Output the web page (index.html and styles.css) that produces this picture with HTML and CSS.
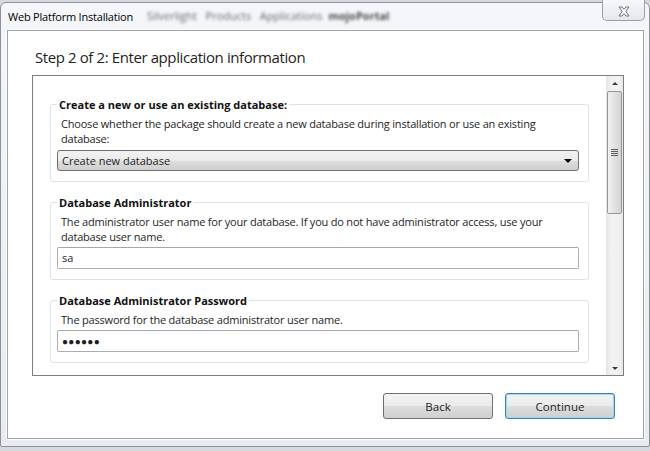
FILE: index.html
```html
<!DOCTYPE html>
<html lang="en">
<head>
    <meta charset="UTF-8">
    <title>Web Platform Installation</title>
    <link rel="stylesheet" href="styles.css">
</head>
<body>
    <div class="window">
        <div class="titlebar">
            <span class="title">Web Platform Installation</span>
            <span class="behind">Silverlight&nbsp;&nbsp; Products&nbsp;&nbsp; Applications&nbsp; <b>mojoPortal</b></span>
            <button class="close-btn">
                <svg width="14" height="11" viewBox="0 0 14 11">
                    <path d="M2 1h3l2 2.5L9 1h3L8.8 5.5 12 10H9L7 7.5 5 10H2l3.2-4.5z" fill="#fff" stroke="#6c7178" stroke-width="1"/>
                </svg>
            </button>
        </div>

        <div class="client">
            <h1 class="step-title">Step 2 of 2: Enter application information</h1>

            <div class="scroll-panel">
                <div class="scroll-content">
                    <fieldset class="group">
                        <legend>Create a new or use an existing database:</legend>
                        <p class="desc">Choose whether the package should create a new database during installation or use an existing database:</p>
                        <div class="select">
                            <span>Create new database</span>
                            <span class="select-arrow"></span>
                        </div>
                    </fieldset>

                    <fieldset class="group">
                        <legend>Database Administrator</legend>
                        <p class="desc">The administrator user name for your database. If you do not have administrator access, use your database user name.</p>
                        <div class="text-input">sa</div>
                    </fieldset>

                    <fieldset class="group">
                        <legend>Database Administrator Password</legend>
                        <p class="desc">The password for the database administrator user name.</p>
                        <div class="text-input password">&#9679;&#9679;&#9679;&#9679;&#9679;&#9679;</div>
                    </fieldset>
                </div>

                <div class="scrollbar">
                    <div class="sb-arrow up"></div>
                    <div class="sb-track">
                        <div class="sb-thumb">
                            <span class="grip"></span>
                        </div>
                    </div>
                    <div class="sb-arrow down"></div>
                </div>
            </div>

            <div class="footer">
                <button class="btn">Back</button>
                <button class="btn primary">Continue</button>
            </div>
        </div>
    </div>
</body>
</html>
```

FILE: styles.css
```css
* {
    margin: 0;
    padding: 0;
    box-sizing: border-box;
}

body {
    width: 650px;
    height: 451px;
    overflow: hidden;
    background-color: #d6dae0;
    font-family: 'Open Sans', 'Noto Sans', Arial, sans-serif;
    font-size: 11px;
    color: #1e1e1e;
}

.window {
    width: 650px;
    height: 445px;
    margin-top: 2px;
    background: linear-gradient(#f4f6f9, #e8ecf1);
    border: 1px solid #8d9299;
    border-radius: 6px 6px 2px 2px;
    display: flex;
    flex-direction: column;
}

.titlebar {
    height: 27px;
    display: flex;
    align-items: flex-start;
    padding-left: 7px;
}

.title {
    font-size: 11px;
    letter-spacing: -0.2px;
    margin-top: 6px;
    color: #000;
}

.behind {
    margin-left: 14px;
    margin-top: 5px;
    font-size: 11px;
    color: #444;
    filter: blur(1.4px);
    opacity: 0.8;
}

.behind b {
    color: #222;
}

.close-btn {
    margin-left: auto;
    margin-right: 4px;
    margin-top: -3px;
    width: 43px;
    height: 21px;
    border: 1px solid #9aa0a8;
    border-top: none;
    border-radius: 0 0 5px 5px;
    background: linear-gradient(#f6f7f9, #e4e8ed);
    display: flex;
    align-items: center;
    justify-content: center;
    padding-top: 2px;
}

.client {
    flex: 1;
    margin: 0 5px 7px 6px;
    background-color: #fff;
    border: 1px solid #9fa4ab;
    box-shadow: 0 0 0 1px #fbfcfd;
    display: flex;
    flex-direction: column;
}

.step-title {
    font-size: 15px;
    font-weight: normal;
    color: #1e1e1e;
    margin: 16px 0 0 27px;
    letter-spacing: -0.4px;
}

.scroll-panel {
    margin: 8px 19px 0 24px;
    height: 301px;
    border: 1px solid #7b7f85;
    display: flex;
    overflow: hidden;
}

.scroll-content {
    flex: 1;
    padding: 21px 17px 0 17px;
    display: flex;
    flex-direction: column;
    gap: 13px;
}

.group {
    border: 1px solid #dde3ea;
    border-radius: 3px;
    padding: 0 9px 10px 6px;
}

.group legend {
    font-weight: bold;
    padding: 0 2px;
    color: #111;
}

.desc {
    line-height: 15px;
    padding: 4px 0 0 4px;
    letter-spacing: -0.2px;
}

.select {
    margin-top: 4px;
    height: 21px;
    border: 1px solid #707070;
    border-radius: 3px;
    background: linear-gradient(#f2f2f2 0%, #ebebeb 50%, #dddddd 51%, #cfcfcf 100%);
    display: flex;
    align-items: center;
    justify-content: space-between;
    padding: 0 6px 0 4px;
}

.select-arrow {
    width: 0;
    height: 0;
    border-left: 4px solid transparent;
    border-right: 4px solid transparent;
    border-top: 4px solid #000;
}

.text-input {
    margin-top: 3px;
    height: 22px;
    border: 1px solid #abadb3;
    border-top-color: #a4a8ae;
    border-radius: 2px;
    padding: 2px 4px;
    line-height: 16px;
}

.password {
    font-size: 10px;
    letter-spacing: 0.3px;
}

.scrollbar {
    width: 17px;
    background: linear-gradient(90deg, #e4e4e4, #f2f2f2 30%, #f2f2f2 70%, #e8e8e8);
    display: flex;
    flex-direction: column;
}

.sb-arrow {
    height: 14px;
    display: flex;
    align-items: center;
    justify-content: center;
}

.sb-arrow::before {
    content: "";
    border-left: 3px solid transparent;
    border-right: 3px solid transparent;
}

.sb-arrow.up::before {
    border-bottom: 3px solid #3c3c3c;
}

.sb-arrow.down::before {
    border-top: 3px solid #3c3c3c;
}

.sb-track {
    flex: 1;
    padding: 1px 1px;
}

.sb-thumb {
    height: 123px;
    border: 1px solid #979797;
    border-radius: 2px;
    background: linear-gradient(90deg, #f1f1f1, #e2e2e2 50%, #d4d4d4);
    display: flex;
    align-items: center;
    justify-content: center;
}

.grip {
    width: 7px;
    height: 7px;
    background: repeating-linear-gradient(#5e5e5e 0, #5e5e5e 1px, transparent 1px, transparent 2px);
}

.footer {
    margin-top: auto;
    display: flex;
    justify-content: flex-end;
    gap: 12px;
    padding: 0 28px 19px 0;
}

.btn {
    width: 110px;
    height: 26px;
    border: 1px solid #707070;
    border-radius: 3px;
    background: linear-gradient(#f2f2f2 0%, #ebebeb 50%, #dddddd 51%, #cfcfcf 100%);
    font-family: 'Open Sans', 'Noto Sans', Arial, sans-serif;
    font-size: 11.5px;
    color: #1e1e1e;
}

.btn.primary {
    border-color: #3c7fb1;
    box-shadow: inset 0 0 0 1px #9ed9f5;
}
```
